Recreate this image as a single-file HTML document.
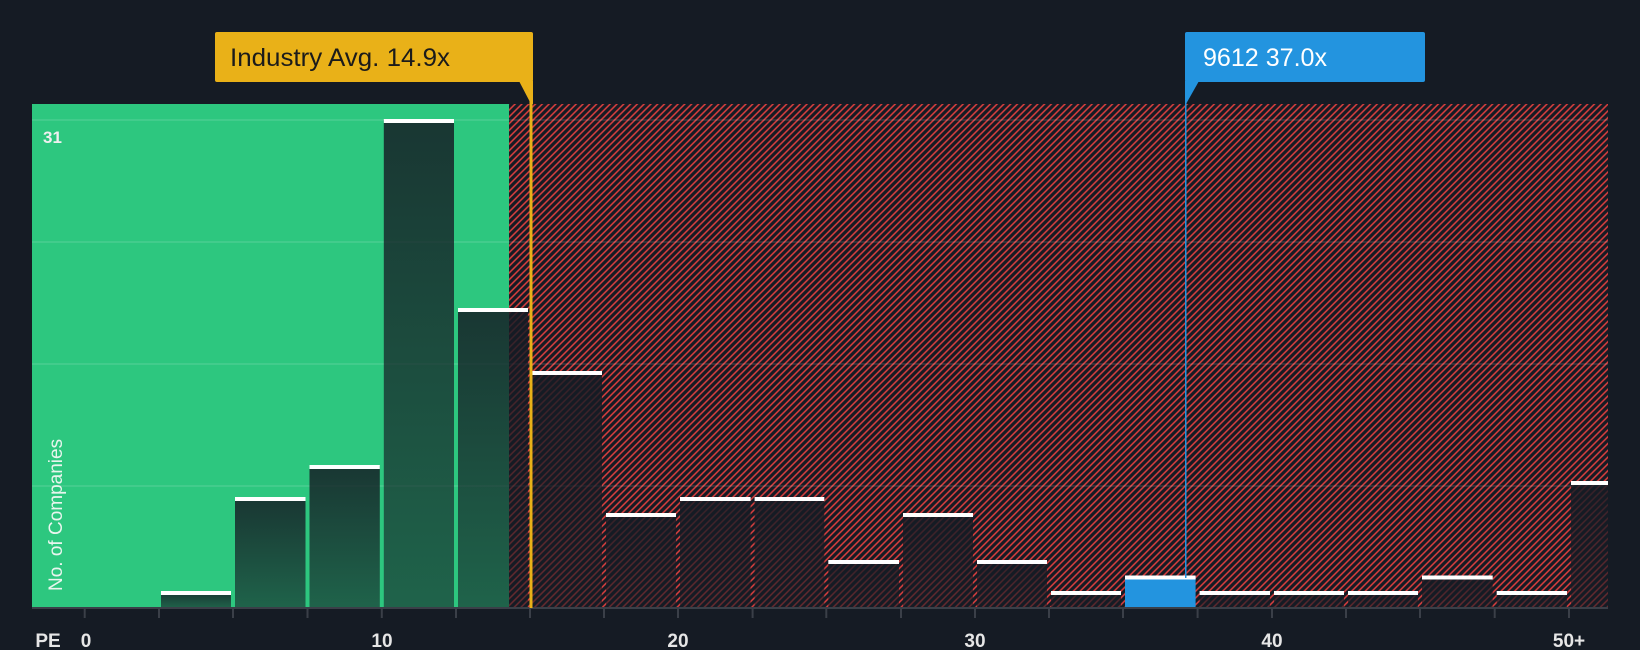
<!DOCTYPE html>
<html><head><meta charset="utf-8"><style>
html,body{margin:0;padding:0;background:#151b24;width:1640px;height:650px;overflow:hidden}
svg{display:block}
text{font-family:"Liberation Sans",sans-serif}
</style></head><body>
<svg width="1640" height="650" viewBox="0 0 1640 650" xmlns="http://www.w3.org/2000/svg">
<defs>
<pattern id="h" patternUnits="userSpaceOnUse" width="4.8" height="4.8" patternTransform="rotate(45)">
<rect width="4.8" height="4.8" fill="#151b24"/>
<line x1="1" y1="0" x2="1" y2="4.8" stroke="#e0403f" stroke-width="1.5"/>
</pattern>
<linearGradient id="bg" x1="0" y1="0" x2="0" y2="1">
<stop offset="0" stop-color="#151b24" stop-opacity="0.84"/>
<stop offset="1" stop-color="#151b24" stop-opacity="0.58"/>
</linearGradient>
</defs>
<rect x="32" y="104" width="477" height="504" fill="#2dc77f"/>
<rect x="509" y="104" width="1099" height="504" fill="url(#h)"/>
<g stroke="#ffffff" stroke-opacity="0.1" stroke-width="2">
<line x1="32" y1="120" x2="1608" y2="120"/>
<line x1="32" y1="242" x2="1608" y2="242"/>
<line x1="32" y1="364" x2="1608" y2="364"/>
<line x1="32" y1="486" x2="1608" y2="486"/>
</g>
<g fill="url(#bg)">
<rect x="161" y="592" width="70" height="16"/>
<rect x="235" y="498" width="70.5" height="110"/>
<rect x="309.5" y="466" width="70.3" height="142"/>
<rect x="383.8" y="120" width="70.2" height="488"/>
<rect x="458" y="309" width="70" height="299"/>
<rect x="532" y="372" width="70" height="236"/>
<rect x="606" y="514" width="70" height="94"/>
<rect x="680" y="498" width="70.6" height="110"/>
<rect x="754.6" y="498" width="69.7" height="110"/>
<rect x="828.3" y="561" width="70.7" height="47"/>
<rect x="903" y="514" width="70" height="94"/>
<rect x="977" y="561" width="70" height="47"/>
<rect x="1051" y="592" width="70" height="16"/>
<rect x="1199.6" y="592" width="70.4" height="16"/>
<rect x="1274" y="592" width="70" height="16"/>
<rect x="1348" y="592" width="70" height="16"/>
<rect x="1422" y="576.5" width="70.7" height="31.5"/>
<rect x="1496.7" y="592" width="70.3" height="16"/>
<rect x="1571" y="482" width="37" height="126"/>
</g>
<rect x="1125" y="576.5" width="70.6" height="31.5" fill="#2394df"/>
<g fill="#ffffff">
<rect x="161" y="591" width="70" height="4"/>
<rect x="235" y="497" width="70.5" height="4"/>
<rect x="309.5" y="465" width="70.3" height="4"/>
<rect x="383.8" y="119" width="70.2" height="4"/>
<rect x="458" y="308" width="70" height="4"/>
<rect x="532" y="371" width="70" height="4"/>
<rect x="606" y="513" width="70" height="4"/>
<rect x="680" y="497" width="70.6" height="4"/>
<rect x="754.6" y="497" width="69.7" height="4"/>
<rect x="828.3" y="560" width="70.7" height="4"/>
<rect x="903" y="513" width="70" height="4"/>
<rect x="977" y="560" width="70" height="4"/>
<rect x="1051" y="591" width="70" height="4"/>
<rect x="1125" y="575.5" width="70.6" height="4"/>
<rect x="1199.6" y="591" width="70.4" height="4"/>
<rect x="1274" y="591" width="70" height="4"/>
<rect x="1348" y="591" width="70" height="4"/>
<rect x="1422" y="575.5" width="70.7" height="4"/>
<rect x="1496.7" y="591" width="70.3" height="4"/>
<rect x="1571" y="481" width="37" height="4"/>
</g>
<line x1="32" y1="608" x2="1608" y2="608" stroke="#3a3f48" stroke-width="2"/>
<g stroke="#3a3f48" stroke-width="2">
<line x1="84.7" y1="608" x2="84.7" y2="618"/><line x1="159" y1="608" x2="159" y2="618"/><line x1="233" y1="608" x2="233" y2="618"/><line x1="307.5" y1="608" x2="307.5" y2="618"/><line x1="381.8" y1="608" x2="381.8" y2="618"/><line x1="456" y1="608" x2="456" y2="618"/><line x1="530" y1="608" x2="530" y2="618"/><line x1="604" y1="608" x2="604" y2="618"/><line x1="678" y1="608" x2="678" y2="618"/><line x1="752.6" y1="608" x2="752.6" y2="618"/><line x1="826.3" y1="608" x2="826.3" y2="618"/><line x1="901" y1="608" x2="901" y2="618"/><line x1="975" y1="608" x2="975" y2="618"/><line x1="1049" y1="608" x2="1049" y2="618"/><line x1="1123" y1="608" x2="1123" y2="618"/><line x1="1197.6" y1="608" x2="1197.6" y2="618"/><line x1="1272" y1="608" x2="1272" y2="618"/><line x1="1346" y1="608" x2="1346" y2="618"/><line x1="1420" y1="608" x2="1420" y2="618"/><line x1="1494.7" y1="608" x2="1494.7" y2="618"/><line x1="1569" y1="608" x2="1569" y2="618"/>
</g>
<rect x="529.5" y="82" width="3" height="526" fill="#e9b118"/>
<rect x="215" y="32" width="318" height="50" rx="2" fill="#e9b118"/>
<polygon points="519,81 533,81 533,104 531,104" fill="#e9b118"/>
<text x="230" y="66" font-size="25" fill="#1b1b1b" textLength="220" lengthAdjust="spacingAndGlyphs">Industry Avg. 14.9x</text>
<rect x="1185" y="82" width="1.5" height="496" fill="#2394df"/>
<rect x="1185" y="32" width="240" height="50" rx="2" fill="#2394df"/>
<polygon points="1185,81 1199,81 1186,104 1185,104" fill="#2394df"/>
<text x="1203" y="66" font-size="25" fill="#ffffff" textLength="124" lengthAdjust="spacingAndGlyphs">9612 37.0x</text>
<text x="43" y="143" font-size="17" font-weight="bold" fill="#f0f0f0">31</text>
<text transform="translate(62,591) rotate(-90)" font-size="19" fill="#e8f5ee">No. of Companies</text>
<g font-size="19" font-weight="bold" fill="#e6e6e6" text-anchor="middle">
<text x="48" y="647">PE</text>
<text x="86" y="647">0</text>
<text x="382" y="647">10</text>
<text x="678" y="647">20</text>
<text x="975" y="647">30</text>
<text x="1272" y="647">40</text>
<text x="1569" y="647">50+</text>
</g>
</svg>
</body></html>
